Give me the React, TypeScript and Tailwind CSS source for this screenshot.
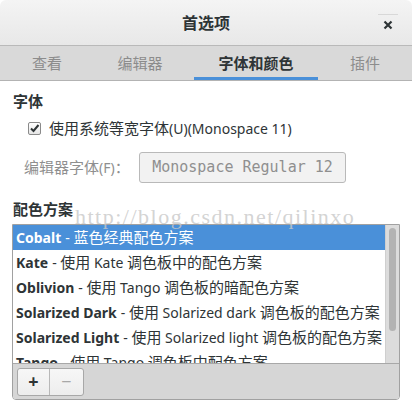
import React from 'react';

const schemes = [
    { name: "Cobalt", desc: "蓝色经典配色方案" },
    { name: "Kate", desc: "使用 Kate 调色板中的配色方案" },
    { name: "Oblivion", desc: "使用 Tango 调色板的暗配色方案" },
    { name: "Solarized Dark", desc: "使用 Solarized dark 调色板的配色方案" },
    { name: "Solarized Light", desc: "使用 Solarized light 调色板的配色方案" },
    { name: "Tango", desc: "使用 Tango 调色板中配色方案" },
];

const tabs = ["查看", "编辑器", "字体和颜色", "插件"];

// CJK glyphs sit a touch larger than the latin ones in the screenshot
function Mixed({ text }: { text: string }) {
    const parts = text.split(/([\u3000-\u9fff\uff00-\uffef]+)/);
    return (
        <>
            {parts.map((p, i) =>
                /[\u3000-\u9fff\uff00-\uffef]/.test(p)
                    ? <span key={i} className="text-[15px]">{p}</span>
                    : <span key={i}>{p}</span>
            )}
        </>
    );
}

export default function App() {
    return (
        <div className="w-[412px] h-[412px] overflow-hidden bg-white text-[#2e3436] font-['Noto_Sans','Noto_Sans_CJK_SC',sans-serif] relative">
            {/* header */}
            <div className="h-[46px] flex items-center justify-center relative bg-gradient-to-b from-[#f4f4f4] to-[#e8e8e8] border-b border-[#b9b9b9] rounded-t-md">
                <span className="text-[16px] font-bold text-[#2e3436]">首选项</span>
                <div className="absolute right-[14px] top-[14px] w-[20px] h-[20px] flex items-center justify-center border-t border-[#d8d8d8]">
                    <svg width="10" height="10" viewBox="0 0 10 10">
                        <path d="M1.5 1.5 L8.5 8.5 M8.5 1.5 L1.5 8.5" stroke="#2e3436" strokeWidth="2.2" />
                    </svg>
                </div>
            </div>

            {/* tabs */}
            <div className="h-[35px] flex bg-[#d9d9d9] border-b border-[#b3b3b3]">
                {tabs.map((t, i) => (
                    <div
                        key={t}
                        className={`relative flex items-center justify-center text-[15px] ${i === 2 ? 'w-[124px] ml-[8px] font-bold text-[#2e3436]' : 'text-[#8c8c8c]'} ${i === 0 ? 'w-[94px]' : ''} ${i === 1 ? 'w-[92px]' : ''} ${i === 3 ? 'flex-1' : ''}`}
                    >
                        {t}
                        {i === 2 && <div className="absolute left-0 right-0 bottom-0 h-[3px] bg-[#4a90d9]" />}
                    </div>
                ))}
            </div>

            {/* content */}
            <div className="px-[12px] pt-[10px] flex flex-col">
                <div className="text-[15px] font-bold leading-[20px] pl-[1px]">字体</div>
                <div className="flex items-center gap-[8px] pl-[16px] mt-[7px] h-[20px]">
                    <div className="w-[13px] h-[13px] border border-[#8a8a8a] rounded-[2px] bg-gradient-to-b from-white to-[#e6e6e6] flex items-center justify-center">
                        <svg width="11" height="11" viewBox="0 0 11 11">
                            <path d="M2 5.5 L4.5 8 L9.5 2" stroke="#2e3436" strokeWidth="2" fill="none" />
                        </svg>
                    </div>
                    <span className="text-[14px] text-[#2e3436]"><Mixed text="使用系统等宽字体(U)(Monospace 11)" /></span>
                </div>
                <div className="flex items-center mt-[14px] pl-[12px]">
                    <span className="text-[14px] text-[#8f8f8f] w-[115px]"><Mixed text="编辑器字体(F)：" /></span>
                    <div className="w-[207px] h-[31px] border border-[#b9b9b9] rounded-[3px] bg-[#f2f2f2] flex items-center justify-center">
                        <span className="text-[15px] text-[#8f8f8f] font-['DejaVu_Sans_Mono',monospace]">Monospace Regular 12</span>
                    </div>
                </div>

                <div className="text-[15px] font-bold leading-[20px] mt-[16px] pl-[1px]">配色方案</div>

                {/* list */}
                <div className="mt-[5px] border border-[#a1a1a1] rounded-b-[4px] flex flex-col overflow-hidden">
                    <div className="flex h-[138px] bg-white">
                        <div className="flex-1 flex flex-col overflow-hidden">
                            {schemes.map((s, i) => (
                                <div
                                    key={s.name}
                                    className={`h-[25px] shrink-0 flex items-center pl-[3px] text-[14px] whitespace-nowrap ${i === 0 ? 'bg-[#4a90d9] text-white' : 'text-[#2e3436]'}`}
                                >
                                    <span className="font-bold">{s.name}</span>
                                    <span className="ml-[4px]">- <Mixed text={s.desc} /></span>
                                </div>
                            ))}
                        </div>
                        <div className="w-[14px] bg-[#dcdcdc] border-l border-[#cfcfcf] py-[3px] flex justify-center">
                            <div className="w-[7px] h-[103px] rounded-full bg-[#b3b3b3]" />
                        </div>
                    </div>
                    <div className="h-[36px] bg-[#d6d6d6] border-t border-[#a8a8a8] flex items-center pl-[4px]">
                        <div className="flex h-[28px] border border-[#a8a8a8] rounded-[3px] bg-gradient-to-b from-[#f7f7f7] to-[#ededed] overflow-hidden">
                            <div className="w-[32px] flex items-center justify-center border-r border-[#b8b8b8] text-[18px] font-bold text-[#2e3436]">+</div>
                            <div className="w-[33px] flex items-center justify-center text-[18px] text-[#a8a8a8]">−</div>
                        </div>
                    </div>
                </div>
            </div>

            {/* watermark */}
            <div className="absolute left-[75px] top-[204px] text-[22px] leading-[26px] text-[#c8c8c8]/80 font-['Liberation_Serif',serif] tracking-[1.5px] pointer-events-none">
                http://blog.csdn.net/qilinxo
            </div>
        </div>
    );
}
